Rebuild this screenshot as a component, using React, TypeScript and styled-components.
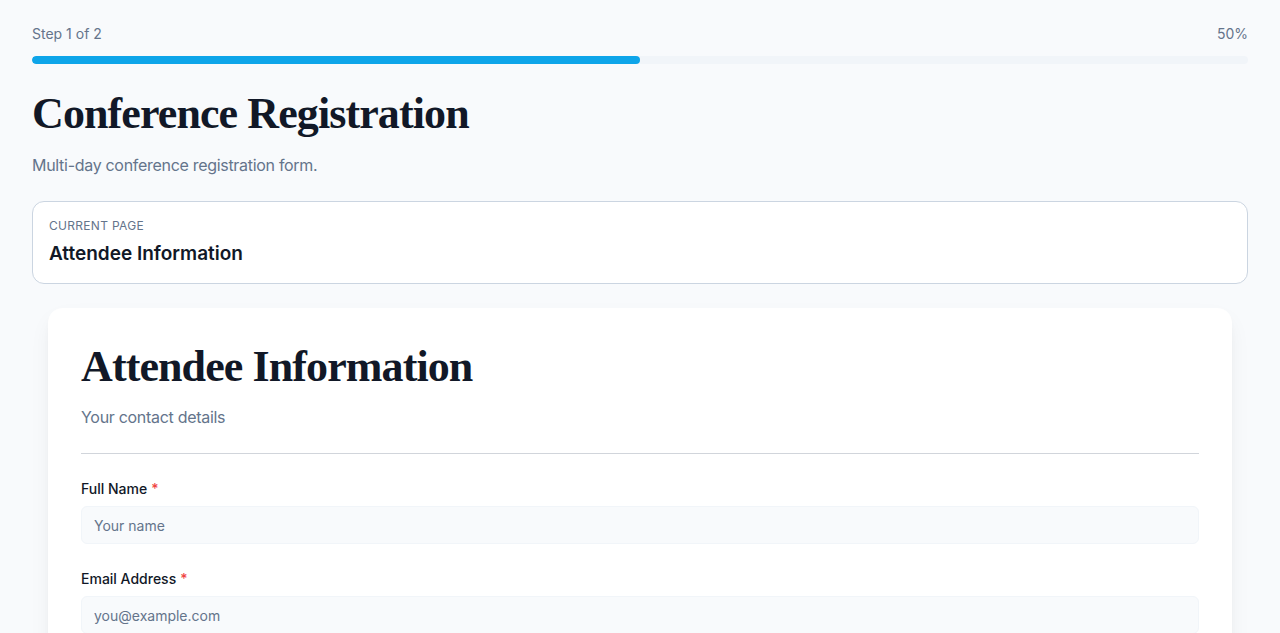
import styled, { createGlobalStyle } from "styled-components";

const GlobalStyle = createGlobalStyle`
  * { box-sizing: border-box; }
  body {
    margin: 0;
    background: #f8fafc;
    font-family: Inter, "Noto Sans", sans-serif;
    color: #111827;
  }
`;

const Page = styled.main`
  padding: 24px 32px 0;
`;

const ProgressHeader = styled.div`
  display: flex;
  justify-content: space-between;
  font-size: 14px;
  line-height: 20px;
  color: #64748b;
`;

const Track = styled.div`
  margin-top: 12px;
  height: 8px;
  border-radius: 999px;
  background: #f1f5f9;
  overflow: hidden;
`;

const Fill = styled.div`
  height: 100%;
  border-radius: 999px;
  background: #0ea5e9;
`;

const Title = styled.h1`
  margin: 24px 0 0;
  font-family: "Liberation Serif", "Times New Roman", serif;
  font-weight: 700;
  font-size: 44px;
  line-height: 52px;
  color: #111827;
  letter-spacing: -0.9px;
`;

const Lead = styled.p`
  margin: 13px 0 0;
  font-size: 16px;
  line-height: 24px;
  letter-spacing: -0.3px;
  color: #64748b;
`;

const CurrentBox = styled.section`
  margin-top: 24px;
  padding: 16px;
  background: #fff;
  border: 1px solid #cbd5e1;
  border-radius: 12px;
`;

const Eyebrow = styled.div`
  font-size: 12px;
  line-height: 16px;
  letter-spacing: 0.3px;
  text-transform: uppercase;
  color: #64748b;
`;

const CurrentName = styled.div`
  margin-top: 6px;
  font-size: 19px;
  line-height: 27px;
  font-weight: 600;
  color: #111827;
`;

const Card = styled.section`
  margin: 24px 16px 0;
  padding: 32px 32px 40px;
  background: #fff;
  border: 1px solid #fff;
  border-radius: 14px;
  box-shadow: 0 10px 25px -5px rgba(15, 23, 42, 0.08),
    0 4px 10px -4px rgba(15, 23, 42, 0.05);
`;

const CardTitle = styled.h2`
  margin: 0;
  font-family: "Liberation Serif", "Times New Roman", serif;
  font-weight: 700;
  font-size: 44px;
  line-height: 52px;
  color: #111827;
  letter-spacing: -0.9px;
`;

const CardLead = styled.p`
  margin: 12px 0 0;
  font-size: 16px;
  line-height: 24px;
  letter-spacing: -0.3px;
  color: #64748b;
`;

const Divider = styled.hr`
  margin: 24px 0 0;
  border: 0;
  border-top: 1px solid #d1d5db;
`;

const Fields = styled.div`
  display: flex;
  flex-direction: column;
  gap: 25px;
  margin-top: 25px;
`;

const Field = styled.div`
  display: flex;
  flex-direction: column;
  gap: 7px;
`;

const Label = styled.label`
  font-size: 14px;
  line-height: 20px;
  font-weight: 500;
  color: #111827;
`;

const Required = styled.span`
  margin-left: 4px;
  color: #ef4444;
`;

const Input = styled.input`
  height: 38px;
  padding: 0 12px;
  font-family: inherit;
  font-size: 14px;
  color: #111827;
  background: #f8fafc;
  border: 1px solid #f1f5f9;
  border-radius: 6px;
  outline: none;
  &::placeholder {
    color: #64748b;
  }
`;

const fields = [
  { label: "Full Name", placeholder: "Your name", type: "text" },
  { label: "Email Address", placeholder: "you@example.com", type: "email" },
];

export default function App() {
  const step = 1;
  const total = 2;
  const pct = Math.round((step / total) * 100);

  return (
    <>
      <GlobalStyle />
      <Page>
        <ProgressHeader>
          <span>
            Step {step} of {total}
          </span>
          <span>{pct}%</span>
        </ProgressHeader>
        <Track>
          <Fill style={{ width: `${pct}%` }} />
        </Track>

        <Title>Conference Registration</Title>
        <Lead>Multi-day conference registration form.</Lead>

        <CurrentBox>
          <Eyebrow>Current Page</Eyebrow>
          <CurrentName>Attendee Information</CurrentName>
        </CurrentBox>

        <Card>
          <CardTitle>Attendee Information</CardTitle>
          <CardLead>Your contact details</CardLead>
          <Divider />
          <Fields>
            {fields.map((f) => (
              <Field key={f.label}>
                <Label>
                  {f.label}
                  <Required>*</Required>
                </Label>
                <Input type={f.type} placeholder={f.placeholder} />
              </Field>
            ))}
          </Fields>
        </Card>
      </Page>
    </>
  );
}
